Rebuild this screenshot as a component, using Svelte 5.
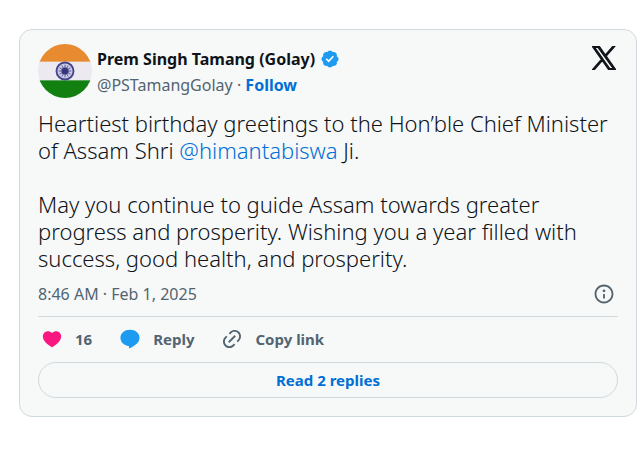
<script>
    let {
        author = "Prem Singh Tamang (Golay)",
        handle = "@PSTamangGolay",
        mention = "@himantabiswa",
        posted = "8:46 AM · Feb 1, 2025",
        likes = 16,
        replies = 2,
    } = $props();

    const spokes = Array.from({ length: 12 }, (_, i) => i * 30);
</script>

<article class="tweet">
    <header class="header">
        <svg class="avatar" viewBox="0 0 52 52" role="img" aria-label={author}>
            <clipPath id="avatar-clip"><circle cx="26" cy="26" r="26" /></clipPath>
            <g clip-path="url(#avatar-clip)">
                <rect width="52" height="18" fill="#e88b30" />
                <rect y="17" width="52" height="19" fill="#eceaf0" />
                <rect y="35" width="52" height="17" fill="#118011" />
            </g>
            <circle cx="26" cy="26" r="8.2" fill="#c9c8df" stroke="#45458f" stroke-width="1.8" />
            {#each spokes as angle}
                <path d="M26 20V32" stroke="#6464a5" stroke-width=".6" transform="rotate({angle} 26 26)" />
            {/each}
            <circle cx="26" cy="26" r="3.4" fill="#35357f" />
        </svg>
        <div class="names">
            <a class="author" href="#profile">
                <span>{author}</span>
                <svg class="verified" viewBox="0 0 22 22" role="img" aria-label="Verified account">
                    <path fill="#1d9bf0" d="M20.396 11c-.018-.646-.215-1.275-.57-1.816-.354-.54-.852-.972-1.438-1.246.223-.607.27-1.264.14-1.897-.131-.634-.437-1.218-.882-1.687-.47-.445-1.053-.75-1.687-.882-.633-.13-1.29-.083-1.897.14-.273-.587-.704-1.086-1.245-1.44S11.647 1.62 11 1.604c-.646.017-1.273.213-1.813.568s-.969.854-1.24 1.44c-.608-.223-1.267-.272-1.902-.14-.635.13-1.22.436-1.69.882-.445.47-.749 1.055-.878 1.688-.13.633-.08 1.29.144 1.896-.587.274-1.087.705-1.443 1.245-.356.54-.555 1.17-.574 1.817.02.647.218 1.276.574 1.817.356.54.856.972 1.443 1.245-.224.606-.274 1.263-.144 1.896.13.634.433 1.218.877 1.688.47.443 1.054.747 1.687.878.633.132 1.29.084 1.897-.136.274.586.705 1.084 1.246 1.439.54.354 1.17.551 1.816.569.647-.016 1.276-.213 1.817-.567s.972-.854 1.245-1.44c.604.239 1.266.296 1.903.164.636-.132 1.22-.447 1.68-.907.46-.46.776-1.044.908-1.681s.075-1.299-.165-1.903c.586-.274 1.084-.705 1.439-1.246.354-.54.551-1.17.569-1.816zM9.662 14.85l-3.429-3.428 1.293-1.302 2.072 2.072 4.4-4.794 1.347 1.246z" />
                </svg>
            </a>
            <div class="account">
                <a class="handle" href="#profile">{handle}</a>
                <span>·</span>
                <a class="follow" href="#follow">Follow</a>
            </div>
        </div>
        <a class="logo" href="#post" aria-label="View on X">
            <svg viewBox="0 0 24 24">
                <path fill="#0f1419" stroke="#0f1419" stroke-width="1.1" d="M14.258 10.152L23.176 0h-2.113l-7.747 8.813L7.133 0H0l9.352 13.328L0 23.973h2.113l8.176-9.309 6.531 9.309h7.133zm-2.895 3.293l-.949-1.328L2.875 1.56h3.246l6.086 8.523.945 1.328 7.91 11.078h-3.246z" />
            </svg>
        </a>
    </header>

    <div class="body">
        <p>Heartiest birthday greetings to the Hon’ble Chief Minister of Assam Shri <a href="#mention">{mention}</a> Ji.</p>
        <p>May you continue to guide Assam towards greater progress and prosperity. Wishing you a year filled with success, good health, and prosperity.</p>
    </div>

    <div class="meta">
        <a href="#post"><time datetime="2025-02-01T08:46">{posted}</time></a>
        <a class="info" href="#info" aria-label="Ads info and privacy">
            <svg viewBox="0 0 24 24">
                <path fill="#536471" d="M13.5 8.5c0 .83-.67 1.5-1.5 1.5s-1.5-.67-1.5-1.5S11.17 7 12 7s1.5.67 1.5 1.5zM13 17v-5h-2v5h2zm-1 5.25c5.66 0 10.25-4.59 10.25-10.25S17.66 1.75 12 1.75 1.75 6.34 1.75 12 6.34 22.25 12 22.25zM20.25 12c0 4.56-3.69 8.25-8.25 8.25S3.75 16.56 3.75 12 7.44 3.75 12 3.75s8.25 3.69 8.25 8.25z" />
            </svg>
        </a>
    </div>

    <div class="actions">
        <button type="button" aria-label="Like">
            <svg viewBox="0 0 24 24">
                <path fill="#f91880" d="M20.884 13.19c-1.351 2.48-4.001 5.12-8.379 7.67l-.503.3-.504-.3c-4.379-2.55-7.029-5.19-8.382-7.67-1.36-2.5-1.41-4.86-.514-6.67.887-1.79 2.647-2.91 4.601-3.01 1.651-.09 3.368.56 4.798 2.01 1.429-1.45 3.146-2.1 4.796-2.01 1.954.1 3.714 1.22 4.601 3.01.896 1.81.846 4.17-.514 6.67z" />
            </svg>
            <span>{likes}</span>
        </button>
        <button type="button">
            <svg viewBox="0 0 24 24">
                <path fill="#1d9bf0" d="M12 2c5.9 0 10.4 3.7 10.4 8.700 0 4-2.800 7-6 8.700-1.600 1.300-3.200 2.200-4.700 2.700-.6.2-.9-.1-.9-.6v-1.900C5.200 19.200 1.600 15.400 1.600 10.700 1.600 5.700 6.100 2 12 2z" />
            </svg>
            <span>Reply</span>
        </button>
        <button type="button">
            <svg viewBox="0 0 24 24">
                <path fill="#536471" d="M18.36 5.64c-1.95-1.96-5.11-1.96-7.07 0L9.88 7.05 8.46 5.64l1.42-1.42c2.73-2.73 7.16-2.73 9.9 0 2.73 2.74 2.73 7.17 0 9.9l-1.42 1.42-1.41-1.42 1.41-1.41c1.96-1.96 1.96-5.12 0-7.07zm-2.12 3.53l-7.07 7.07-1.41-1.41 7.07-7.07 1.41 1.41zm-12.02.71l1.42-1.42 1.41 1.42-1.41 1.41c-1.96 1.96-1.96 5.12 0 7.07 1.95 1.96 5.11 1.96 7.07 0l1.41-1.41 1.42 1.41-1.42 1.42c-2.73 2.73-7.16 2.73-9.9 0-2.73-2.74-2.73-7.17 0-9.9z" />
            </svg>
            <span>Copy link</span>
        </button>
    </div>

    <button class="read" type="button">Read {replies} replies</button>
</article>

<style>
    :global(body) {
        background: #fff;
    }

    .tweet {
        margin: 29px 6px 32px 19px;
        padding: 14px 18px 18px;
        border: 1px solid #cfd9de;
        border-radius: 13px;
        background: #f7f9f9;
        color: #0f1419;
        font-family: "Noto Sans", "Open Sans", sans-serif;
        font-size: 16px;
        line-height: 26px;
    }

    a {
        color: inherit;
        text-decoration: none;
    }

    svg {
        display: block;
    }

    .header {
        display: flex;
        align-items: flex-start;
    }

    .avatar {
        width: 54px;
        height: 54px;
        margin-right: 5px;
    }

    .names {
        flex: 1;
        padding-top: 2px;
    }

    .author {
        display: flex;
        align-items: center;
        gap: 5px;
        font-weight: 700;
    }

    .verified {
        width: 20px;
        height: 20px;
    }

    .account,
    .meta {
        color: #536471;
    }

    .follow {
        color: #006fd6;
        font-weight: 700;
    }

    .logo svg {
        width: 24px;
        height: 24px;
        margin: 2px 2px 0 0;
    }

    .body {
        display: flex;
        flex-direction: column;
        gap: 27px;
        margin-top: 12px;
        color: #0f1419;
        font-size: 22px;
        font-weight: 300;
        line-height: 27px;
    }

    .body p {
        margin: 0;
    }

    .body a {
        color: #006fd6;
    }

    .meta {
        display: flex;
        align-items: center;
        justify-content: space-between;
        padding: 9px 0;
        border-bottom: 1px solid #cfd9de;
    }

    .info svg {
        width: 22px;
        height: 22px;
        margin-right: 3px;
    }

    .actions {
        display: flex;
        gap: 27px;
        padding: 9px 3px 10px;
    }

    button {
        padding: 0;
        border: 0;
        background: none;
        color: #536471;
        font: inherit;
        font-size: 15px;
        font-weight: 700;
        cursor: pointer;
    }

    .actions button {
        display: flex;
        align-items: center;
        gap: 12px;
    }

    .actions svg {
        width: 22px;
        height: 22px;
    }

    .read {
        width: 100%;
        padding: 4px 16px;
        border: 1px solid #cfd9de;
        border-radius: 18px;
        color: #006fd6;
    }
</style>
